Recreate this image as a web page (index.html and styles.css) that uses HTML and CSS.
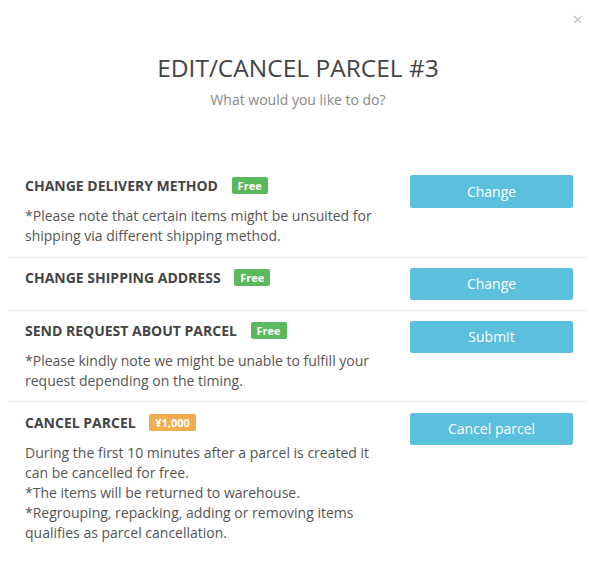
FILE: index.html
```html
<!DOCTYPE html>
<html>
<head>
<meta charset="utf-8">
<link rel="stylesheet" href="styles.css">
</head>
<body>
<div class="modal">
  <button class="close" type="button">&times;</button>
  <div class="header">
    <h1 class="title">EDIT/CANCEL PARCEL #3</h1>
    <p class="subtitle">What would you like to do?</p>
  </div>
  <div class="options">
    <div class="option first">
      <div class="info">
        <h3 class="heading">CHANGE DELIVERY METHOD <span class="badge free">Free</span></h3>
        <p class="desc">*Please note that certain items might be unsuited for shipping via different shipping method.</p>
      </div>
      <div class="action"><button class="btn">Change</button></div>
    </div>
    <div class="option">
      <div class="info">
        <h3 class="heading">CHANGE SHIPPING ADDRESS <span class="badge free">Free</span></h3>
      </div>
      <div class="action"><button class="btn">Change</button></div>
    </div>
    <div class="option">
      <div class="info">
        <h3 class="heading">SEND REQUEST ABOUT PARCEL <span class="badge free">Free</span></h3>
        <p class="desc">*Please kindly note we might be unable to fulfill your request depending on the timing.</p>
      </div>
      <div class="action"><button class="btn">Submit</button></div>
    </div>
    <div class="option last">
      <div class="info">
        <h3 class="heading">CANCEL PARCEL <span class="badge paid">¥1,000</span></h3>
        <p class="desc">During the first 10 minutes after a parcel is created it can be cancelled for free.<br>*The items will be returned to warehouse.<br>*Regrouping, repacking, adding or removing items qualifies as parcel cancellation.</p>
      </div>
      <div class="action"><button class="btn">Cancel parcel</button></div>
    </div>
  </div>
</div>
</body>
</html>
```

FILE: styles.css
```css
* { box-sizing: border-box; }
html, body {
  margin: 0;
  padding: 0;
  background: #fff;
}
body {
  font-family: "Open Sans", "Liberation Sans", sans-serif;
  font-size: 14px;
  line-height: 20px;
  color: #555;
}
.modal {
  position: relative;
  width: 595px;
  min-height: 574px;
  padding: 0 7px 0 8px;
}
.close {
  position: absolute;
  top: 9px;
  right: 12px;
  border: 0;
  background: none;
  padding: 0;
  font-family: "Open Sans", "Liberation Sans", sans-serif;
  font-size: 19px;
  line-height: 20px;
  color: #c4c4c4;
  cursor: pointer;
}
.header {
  padding-top: 54px;
  text-align: center;
}
.title {
  margin: 0;
  font-size: 24.5px;
  line-height: 28px;
  font-weight: 400;
  color: #444;
}
.subtitle {
  margin: 8px 0 0;
  font-size: 14px;
  line-height: 20px;
  color: #888;
}
.options {
  margin-top: 55px;
}
.option {
  display: flex;
  border-top: 1px solid #eee;
  padding: 10px 0;
}
.option.first {
  border-top: 0;
  padding-top: 11px;
  padding-bottom: 11px;
}
.option.first .btn {
  margin-top: -1px;
  height: 33px;
}
.option.last {
  padding-top: 11px;
}
.info {
  width: 387px;
  padding: 0 15px 0 17px;
}
.action {
  flex: 1;
  padding: 0 15px;
}
.heading {
  margin: 0;
  font-size: 14px;
  line-height: 20px;
  font-weight: 700;
  color: #444;
}
.badge {
  display: inline-block;
  margin-left: 10px;
  padding: 0 6px;
  font-size: 11px;
  line-height: 17px;
  font-weight: 700;
  color: #fff;
  border-radius: 2px;
  vertical-align: 1px;
}
.free { background: #5cb85c; }
.paid { background: #f0ad4e; }
.desc {
  margin: 10px 0 0;
  font-size: 14px;
  line-height: 20px;
  color: #555;
}
.btn {
  display: block;
  width: 100%;
  height: 32px;
  border: 0;
  border-radius: 2px;
  background: #5bc0de;
  color: #fff;
  font-family: "Open Sans", "Liberation Sans", sans-serif;
  font-size: 14px;
  line-height: 20px;
  cursor: pointer;
}
```
